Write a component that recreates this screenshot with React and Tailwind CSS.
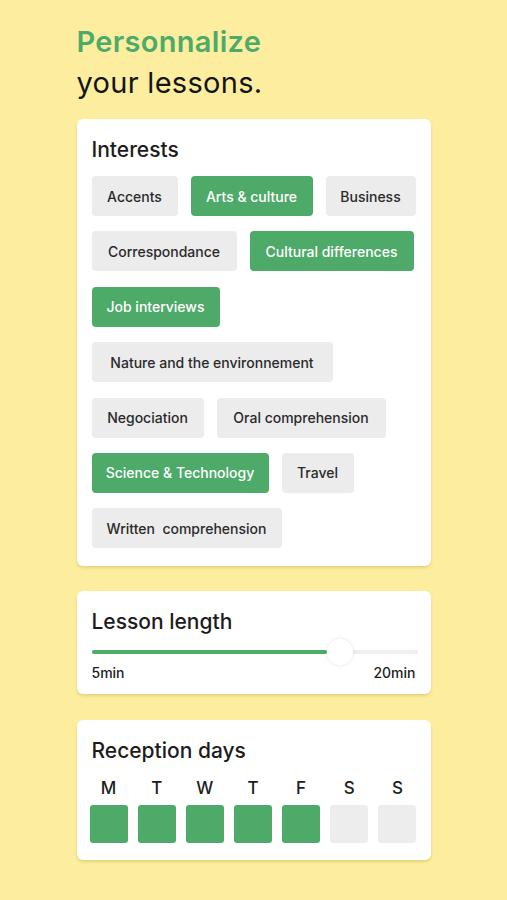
const interests = [
    { label: 'Accents', w: 'w-[86px]', on: false },
    { label: 'Arts & culture', w: 'w-[122px]', on: true },
    { label: 'Business', w: 'w-[90px]', on: false },
    { label: 'Correspondance', w: 'w-[145px]', on: false },
    { label: 'Cultural differences', w: 'w-[164px]', on: true },
    { label: 'Job interviews', w: 'w-[128px]', on: true },
    { label: 'Nature and the environnement', w: 'w-[241px]', on: false },
    { label: 'Negociation', w: 'w-[112px]', on: false },
    { label: 'Oral comprehension', w: 'w-[169px]', on: false },
    { label: 'Science & Technology', w: 'w-[177px]', on: true },
    { label: 'Travel', w: 'w-[72px]', on: false },
    { label: 'Written  comprehension', w: 'w-[190px]', on: false },
];

const days = [
    { d: 'M', on: true },
    { d: 'T', on: true },
    { d: 'W', on: true },
    { d: 'T', on: true },
    { d: 'F', on: true },
    { d: 'S', on: false },
    { d: 'S', on: false },
];

function Card({ title, children, className = '' }) {
    return (
        <section className={`bg-white rounded-[6px] shadow-[0_2px_3px_rgba(180,160,60,0.35)] px-[15px] pt-[17px] ${className}`}>
            <h2 className="text-[21px] leading-[28px] font-medium text-[#1c1c1c]">{title}</h2>
            {children}
        </section>
    );
}

export default function App() {
    return (
        <div
            className="min-h-[900px] bg-[#fdee9f] flex justify-center"
            style={{ fontFamily: 'Inter, "Noto Sans", sans-serif' }}
        >
            <div className="w-[354px] pt-[21px]">
                <h1 className="text-[29px] leading-[41px] tracking-[0.3px]">
                    <span className="block font-semibold text-[#4eaa69]">Personnalize</span>
                    <span className="block text-[#141414]">your lessons.</span>
                </h1>

                {/* Interests */}
                <Card title="Interests" className="mt-[16px] pb-[18px]">
                    <div className="flex flex-wrap gap-x-[13px] gap-y-[15.4px] mt-[12px]">
                        {interests.map((it) => (
                            <div
                                key={it.label}
                                className={`${it.w} h-[40px] rounded-[4px] flex items-center justify-center text-[14px] font-medium whitespace-pre ${
                                    it.on ? 'bg-[#4eaa69] text-white' : 'bg-[#ececec] text-[#2a2a2a]'
                                }`}
                            >
                                {it.label}
                            </div>
                        ))}
                    </div>
                </Card>

                {/* Lesson length */}
                <Card title="Lesson length" className="mt-[25px] pb-[12px]">
                    <div className="relative h-[24px] mt-[4px] mr-[-2px] flex items-center">
                        <div className="w-full h-[4px] rounded-full bg-[#efefef]">
                            <div className="h-full w-[235px] rounded-full bg-[#4eaa69]" />
                        </div>
                        <div className="absolute left-[235px] top-[-1px] w-[26px] h-[26px] rounded-full bg-white shadow-[0_0_4px_rgba(0,0,0,0.12)]" />
                    </div>
                    <div className="flex justify-between text-[14px] leading-[18px] font-medium text-[#1c1c1c]">
                        <span>5min</span>
                        <span>20min</span>
                    </div>
                </Card>

                {/* Reception days */}
                <Card title="Reception days" className="mt-[26px] pb-[17px]">
                    <div className="grid grid-cols-7 gap-x-[10px] ml-[-2px] mr-[-1px] mt-[12px]">
                        {days.map((x, i) => (
                            <div key={i} className="flex flex-col items-center">
                                <span className="text-[17px] leading-[22px] font-medium text-[#1c1c1c]">{x.d}</span>
                                <div className={`mt-[6px] w-full h-[38px] rounded-[3px] ${x.on ? 'bg-[#4eaa69]' : 'bg-[#ededed]'}`} />
                            </div>
                        ))}
                    </div>
                </Card>
            </div>
        </div>
    );
}
